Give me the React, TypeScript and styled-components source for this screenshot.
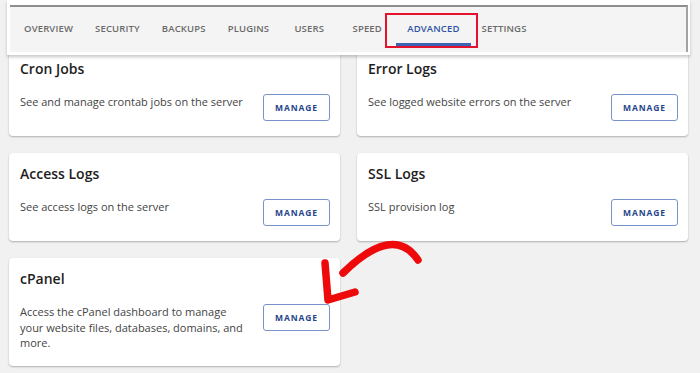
import React from "react"
import styled, { createGlobalStyle } from "styled-components"

const GlobalStyle = createGlobalStyle`
  html, body {
    margin: 0;
    padding: 0;
    background: #f1f1f1;
    font-family: "Open Sans", "Liberation Sans", sans-serif;
  }
  * { box-sizing: border-box; }
`

const Page = styled.div`
  position: relative;
  width: 700px;
  height: 373px;
  overflow: hidden;
  background: #f1f1f1;
`

const TabFrame = styled.div`
  position: absolute;
  top: 0;
  left: 7px;
  width: 683px;
  height: 55px;
  background: #ffffff;
  box-shadow: 0 2px 3px rgba(0, 0, 0, 0.22);
  padding: 5px 2px 0 3px;
  z-index: 2;
`

const TabBar = styled.div`
  height: 47px;
  background: #f4f4f4;
  border-top: 2px solid #8e8e8e;
  border-right: 2px solid #a2a2a2;
  display: flex;
  padding-left: 3px;
`

const Tab = styled.div<{ active?: boolean }>`
  position: relative;
  min-width: 58px;
  height: 39px;
  padding: 6px 11px 0;
  display: flex;
  align-items: center;
  justify-content: center;
  font-size: 9.5px;
  font-weight: 600;
  letter-spacing: 0.15px;
  color: ${(p) => (p.active ? "#2f54a3" : "#6b6b6b")};
  border-bottom: 3px solid ${(p) => (p.active ? "#3d63b5" : "transparent")};
`

const Highlight = styled.div`
  position: absolute;
  left: -11px;
  top: 6px;
  right: -7px;
  bottom: -5px;
  border: 2px solid #e3132e;
`

const Grid = styled.div`
  display: grid;
  grid-template-columns: 331px 331px;
  column-gap: 17px;
  row-gap: 17px;
  padding: 48px 0 0 9px;
  align-items: stretch;
`

const Card = styled.div`
  background: #ffffff;
  border-radius: 4px;
  box-shadow: 0 1px 2px rgba(0, 0, 0, 0.28);
  padding: 11px 10px 15px 11px;
`

const Title = styled.div`
  font-size: 14px;
  font-weight: 600;
  line-height: 20px;
  color: #1e1e1e;
  margin-bottom: 15px;
`

const Row = styled.div`
  display: flex;
  align-items: flex-start;
  justify-content: space-between;
`

const Desc = styled.div`
  font-size: 11px;
  line-height: 15.5px;
  color: #444444;
  max-width: 226px;
`

const ManageButton = styled.button`
  flex: none;
  width: 67px;
  height: 27px;
  background: #ffffff;
  border: 1px solid #7893c9;
  border-radius: 3px;
  font-family: "Open Sans", "Liberation Sans", sans-serif;
  font-size: 8.5px;
  font-weight: 700;
  letter-spacing: 0.9px;
  color: #27468a;
  padding: 0;
  cursor: pointer;
`

const Arrow = styled.svg`
  position: absolute;
  left: 315px;
  top: 220px;
  z-index: 3;
`

const tabs = ["OVERVIEW", "SECURITY", "BACKUPS", "PLUGINS", "USERS", "SPEED", "ADVANCED", "SETTINGS"]

const cards = [
  { title: "Cron Jobs", desc: "See and manage crontab jobs on the server" },
  { title: "Error Logs", desc: "See logged website errors on the server" },
  { title: "Access Logs", desc: "See access logs on the server" },
  { title: "SSL Logs", desc: "SSL provision log" },
  { title: "cPanel", desc: "Access the cPanel dashboard to manage your website files, databases, domains, and more." },
]

export default function App() {
  return (
    <Page>
      <GlobalStyle />
      <TabFrame>
        <TabBar>
          {tabs.map((t) => (
            <Tab key={t} active={t === "ADVANCED"}>
              {t}
              {t === "ADVANCED" && <Highlight />}
            </Tab>
          ))}
        </TabBar>
      </TabFrame>

      <Grid>
        {cards.map((c) => (
          <Card key={c.title}>
            <Title>{c.title}</Title>
            <Row>
              <Desc>{c.desc}</Desc>
              <ManageButton>MANAGE</ManageButton>
            </Row>
          </Card>
        ))}
      </Grid>

      {/* red annotation arrow pointing at the cPanel button */}
      <Arrow width="115" height="90" viewBox="0 0 115 90">
        <path
          d="M103 40 Q78.5 3.5 28 53"
          fill="none"
          stroke="#ee0a0a"
          strokeWidth="7.5"
          strokeLinecap="round"
        />
        <path
          d="M10 43 L13 80 L40 72"
          fill="none"
          stroke="#ee0a0a"
          strokeWidth="7.5"
          strokeLinecap="round"
          strokeLinejoin="round"
        />
      </Arrow>
    </Page>
  )
}
